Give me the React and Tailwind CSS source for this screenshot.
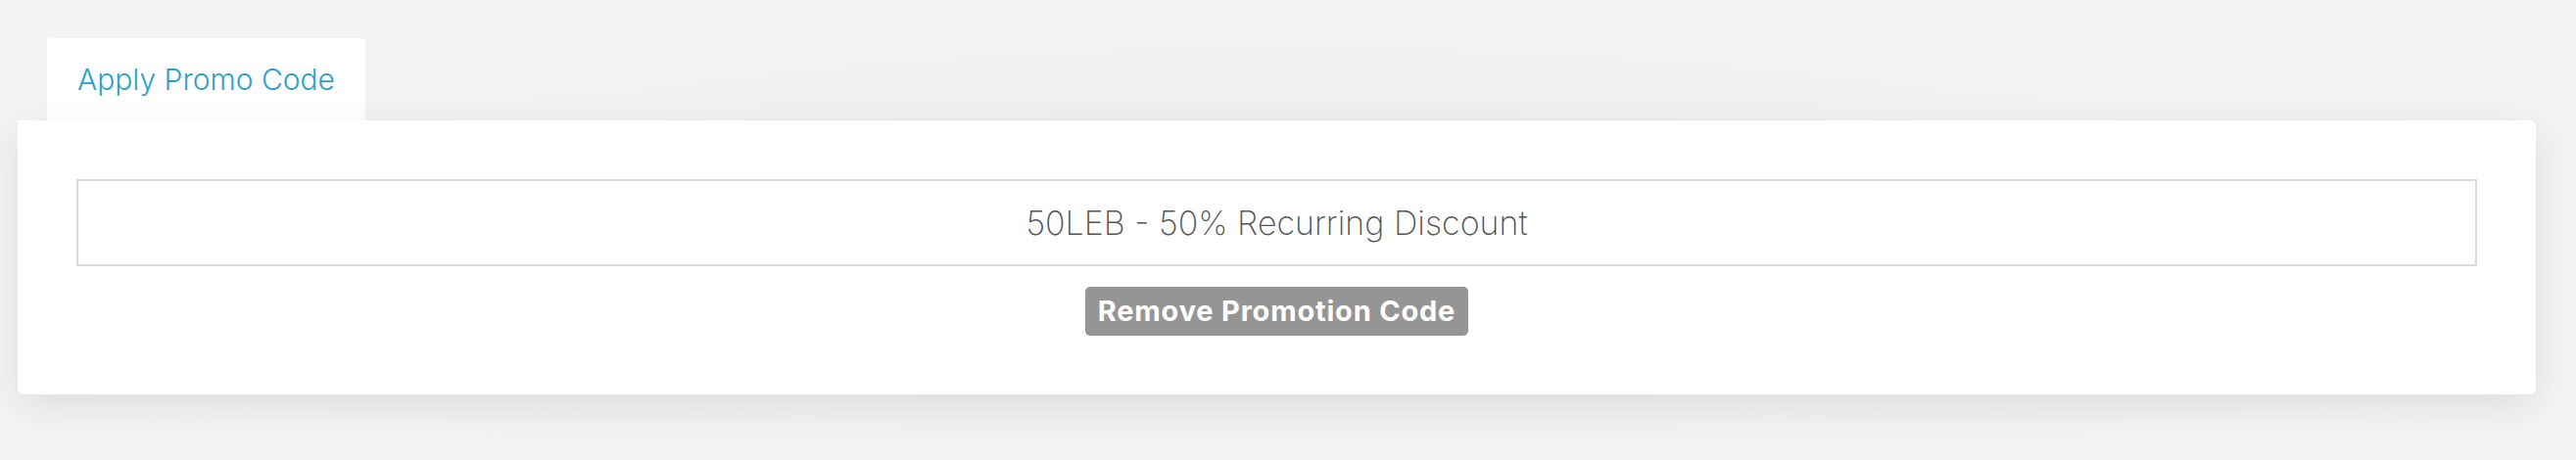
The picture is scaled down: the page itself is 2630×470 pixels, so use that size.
import React from "react";

const FONT = "font-['Inter','Lato','Noto_Sans',sans-serif]";

export default function App() {
  return (
    <div
      className={`${FONT} min-h-[470px] w-full bg-[radial-gradient(ellipse_at_center,#ececec_0%,#f2f2f2_60%,#f4f4f4_100%)] pl-[18px] pr-[41px] pt-[39px]`}
    >
      <div className="ml-[30px] flex h-[84px] w-[325px] items-center justify-center rounded-t-[5px] bg-white">
        <span className="text-[30px] font-light text-[#2fa0c9]">Apply Promo Code</span>
      </div>

      <div className="flex h-[280px] flex-col items-center rounded-b-[6px] rounded-tr-[6px] bg-white px-[60px] pt-[60px] shadow-[0_12px_40px_rgba(0,0,0,0.09)]">
        <div className="flex h-[89px] w-full items-center justify-center border-2 border-[#dadada]">
          <span className="text-[34px] font-extralight text-[#555555]">50LEB - 50% Recurring Discount</span>
        </div>
        <button className="mt-[21px] flex h-[50px] w-[391px] items-center justify-center rounded-[5px] bg-[#959595] text-[29px] font-bold tracking-[0.8px] text-white">
          Remove Promotion Code
        </button>
      </div>
    </div>
  );
}
